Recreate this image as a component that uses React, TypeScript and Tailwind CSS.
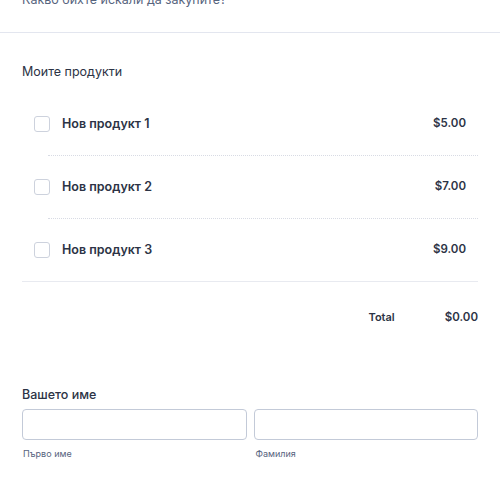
import React from "react";

const products = [
  { name: "Нов продукт 1", price: "$5.00" },
  { name: "Нов продукт 2", price: "$7.00" },
  { name: "Нов продукт 3", price: "$9.00" },
];

export default function App() {
  return (
    <div
      className="w-[500px] h-[484px] overflow-hidden bg-white text-[#2c3345]"
      style={{ fontFamily: "Inter, 'Noto Sans', sans-serif" }}
    >
      <div className="h-[33px] border-b border-[#e3e6ef] px-[22px]">
        <p className="relative -top-[10px] text-[12.5px] leading-[20px] text-[#57647e]">
          Какво бихте искали да закупите?
        </p>
      </div>

      <div className="px-[22px]">
        <h3 className="mt-[29px] text-[12.5px] leading-[20px]">Моите продукти</h3>

        <div className="mt-[11px] border-b border-[#e8eaf0]">
          {products.map((p, i) => (
            <div key={p.name} className="pl-[26px]">
              <div className="flex h-[62px] items-center pr-[12px]">
                <span className="ml-[-14px] mr-[12px] h-[16px] w-[16px] rounded-[3px] border border-[#cdd2dd] bg-white" />
                <span className="flex-1 text-[12.5px] font-semibold">{p.name}</span>
                <span className="text-[11.5px] font-semibold">{p.price}</span>
              </div>
              {i < products.length - 1 && (
                <div className="border-b border-dotted border-[#d8dbe4]" />
              )}
            </div>
          ))}
        </div>

        <div className="flex h-[70px] items-center justify-end pt-[1px]">
          <span className="text-[11px] font-semibold">Total</span>
          <span className="ml-[50px] text-[11.5px] font-semibold">$0.00</span>
        </div>

        <h3 className="mt-[33px] text-[12.5px] font-medium leading-[20px]">Вашето име</h3>
        <div className="mt-[4px] flex gap-[7px]">
          <div className="flex-1">
            <div className="h-[31px] rounded-[4px] border border-[#c3cad8]" />
            <div className="mt-[7px] pl-[1px] text-[9px] text-[#57647e]">Първо име</div>
          </div>
          <div className="flex-1">
            <div className="h-[31px] rounded-[4px] border border-[#c3cad8]" />
            <div className="mt-[7px] pl-[2px] text-[9px] text-[#57647e]">Фамилия</div>
          </div>
        </div>
      </div>
    </div>
  );
}
